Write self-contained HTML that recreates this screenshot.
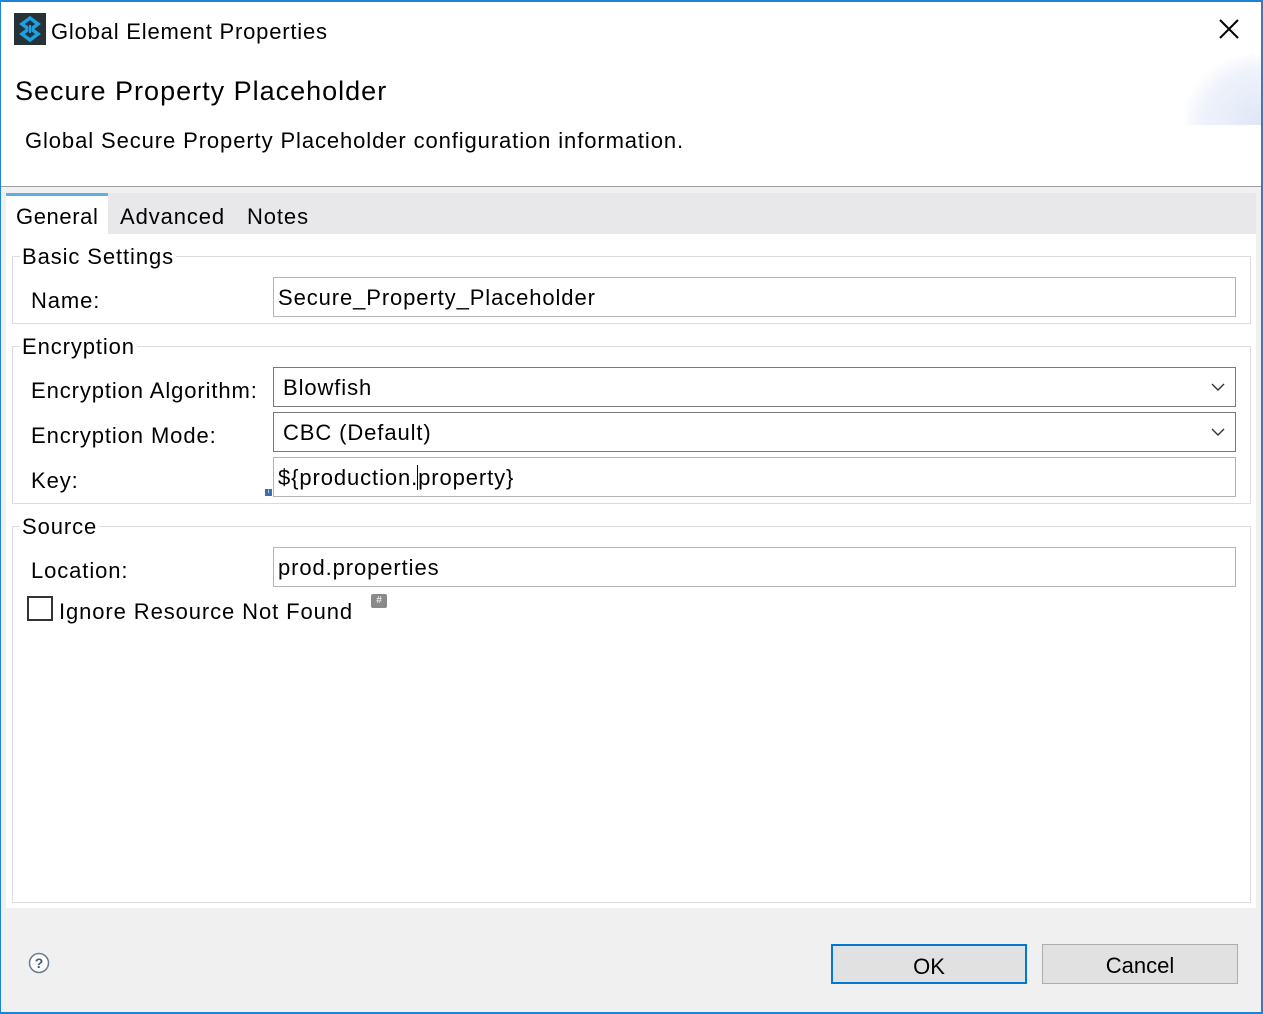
<!DOCTYPE html>
<html><head><meta charset="utf-8"><style>
*{margin:0;padding:0;box-sizing:border-box}
body{width:1263px;height:1014px;overflow:hidden;background:#f0f0f0;font-family:"Liberation Sans",sans-serif;color:#000;position:relative}
.a{position:absolute}
.t{font-size:22px;white-space:nowrap;letter-spacing:0.9px}
.grp{position:absolute;border:1px solid #dcdcdc;left:12px;width:1239px}
.lg{position:absolute;background:#fff;padding:0 2px;font-size:22px;left:7px;top:-13px;line-height:26px;letter-spacing:0.9px}
.in{position:absolute;left:273px;width:963px;height:40px;border:1px solid #b4b4b4;background:#fff;font-size:22px;line-height:40px;padding-left:4px;letter-spacing:0.9px}
.sel{border-color:#7a7a7a;padding-left:9px}
.chev{position:absolute;right:10px;top:12px}
.btn{position:absolute;top:944px;width:196px;height:40px;background:#e1e1e1;border:1px solid #adadad;font-size:22px;text-align:center;line-height:42px}
</style></head><body>
<div class="a" style="left:0;top:0;width:1263px;height:186px;background:#fff"></div>
<div class="a" style="left:0;top:186px;width:1263px;height:1px;background:#a0a0a0"></div>
<div class="a" style="left:1185px;top:55px;width:78px;height:70px;background:radial-gradient(ellipse at 100% 100%,#dfe6f7 0%,#eef2fb 55%,rgba(255,255,255,0) 75%)"></div>
<svg class="a" style="left:14px;top:13px" width="32" height="32" viewBox="0 0 32 32"><rect width="32" height="32" fill="#263238"/><path d="M16 5 L24 11 L16 17 L8 11 Z M16 15 L24 21 L16 27 L8 21 Z" fill="none" stroke="#1ba1e2" stroke-width="3.5"/><rect x="14.5" y="12" width="3" height="9" fill="#263238"/><rect x="15" y="12" width="2" height="8" fill="#1ba1e2"/></svg>
<div class="a t" style="left:51px;top:19px;letter-spacing:0.8px">Global Element Properties</div>
<svg class="a" style="left:1218px;top:18px" width="22" height="22"><path d="M2 2 L20 20 M20 2 L2 20" stroke="#000" stroke-width="2"/></svg>
<div class="a t" style="left:15px;top:76px;font-size:27px;letter-spacing:1px">Secure Property Placeholder</div>
<div class="a t" style="left:25px;top:128px">Global Secure Property Placeholder configuration information.</div>
<div class="a" style="left:6px;top:193px;width:1250px;height:41px;background:#e8e8ea"></div>
<div class="a" style="left:6px;top:193px;width:102px;height:41px;background:#fff;border-top:3px solid #5ab0e0"></div>
<div class="a t" style="left:16px;top:204px;letter-spacing:0.6px">General</div>
<div class="a t" style="left:120px;top:204px">Advanced</div>
<div class="a t" style="left:247px;top:204px">Notes</div>
<div class="a" style="left:6px;top:234px;width:1250px;height:674px;background:#fff"></div>
<div class="grp" style="top:256px;height:68px"><div class="lg">Basic Settings</div></div>
<div class="a t" style="left:31px;top:288px">Name:</div>
<div class="in" style="top:277px">Secure_Property_Placeholder</div>
<div class="grp" style="top:346px;height:158px"><div class="lg">Encryption</div></div>
<div class="a t" style="left:31px;top:378px">Encryption Algorithm:</div>
<div class="in sel" style="top:367px">Blowfish<svg class="chev" width="14" height="14"><path d="M1 4 L7 10 L13 4" fill="none" stroke="#333" stroke-width="1.4"/></svg></div>
<div class="a t" style="left:31px;top:423px">Encryption Mode:</div>
<div class="in sel" style="top:412px">CBC (Default)<svg class="chev" width="14" height="14"><path d="M1 4 L7 10 L13 4" fill="none" stroke="#333" stroke-width="1.4"/></svg></div>
<div class="a t" style="left:31px;top:468px">Key:</div>
<div class="in" style="top:457px">${production.<span style="border-left:1px solid #000;margin-left:-1px"></span>property}</div>
<div class="a" style="left:265px;top:489px;width:7px;height:7px;background:#3b6fb0;color:#fff;font-size:6px;line-height:7px;text-align:center">i</div>
<div class="grp" style="top:526px;height:377px"><div class="lg">Source</div></div>
<div class="a t" style="left:31px;top:558px">Location:</div>
<div class="in" style="top:547px">prod.properties</div>
<div class="a" style="left:27px;top:596px;width:26px;height:25px;border:2px solid #333;background:#fff"></div>
<div class="a t" style="left:59px;top:599px">Ignore Resource Not Found</div>
<div class="a" style="left:371px;top:594px;width:16px;height:14px;background:#8a8a8a;color:#fff;font-size:10px;line-height:14px;text-align:center;border-radius:2px">#</div>
<svg class="a" style="left:28px;top:952px" width="22" height="22"><circle cx="11" cy="11" r="9.5" fill="#fff" stroke="#6a7a90" stroke-width="1.5"/><text x="11" y="16" font-size="14" font-family="Liberation Sans" font-weight="bold" text-anchor="middle" fill="#4a5a70">?</text></svg>
<div class="btn" style="left:831px;border:2px solid #0078d7">OK</div>
<div class="btn" style="left:1042px">Cancel</div>
<div class="a" style="left:0;top:0;width:1263px;height:2px;background:#1c84d8"></div>
<div class="a" style="left:0;top:0;width:1px;height:1014px;background:#1c84d8"></div>
<div class="a" style="left:1261px;top:0;width:2px;height:1014px;background:#1c84d8"></div>
<div class="a" style="left:0;top:1012px;width:1263px;height:2px;background:#1c84d8"></div>
</body></html>
